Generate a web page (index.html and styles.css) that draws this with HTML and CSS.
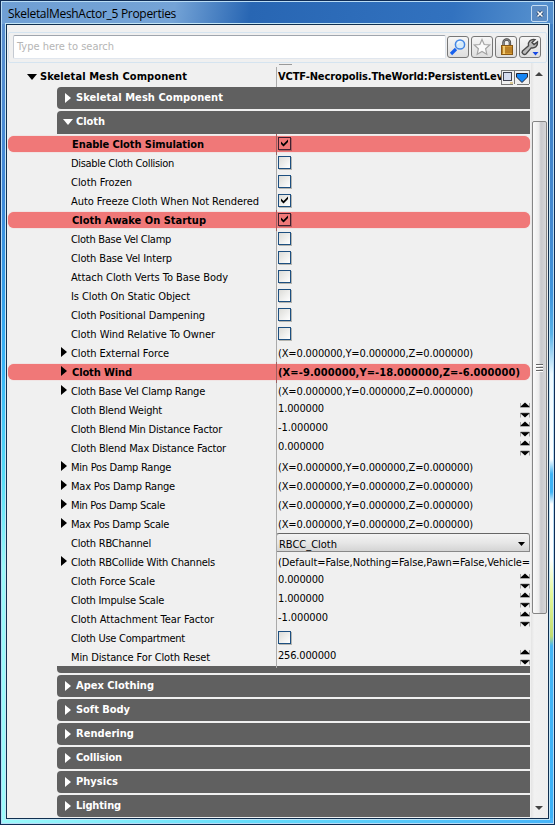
FILE: index.html
```html
<!DOCTYPE html>
<html lang="en"><head><meta charset="utf-8"><title>SkeletalMeshActor_5 Properties</title><link rel="stylesheet" href="styles.css"></head>
<body>
<div class="window">
<header class="title"><span data-w="168">SkeletalMeshActor_5 Properties</span><button class="close" aria-label="Close"><svg width="8" height="8" viewBox="0 0 8 8"><path d="M1.500 1.500l5 5M6.500 1.500l-5 5" stroke="#203c60" stroke-width="3"/><path d="M1.500 1.500l5 5M6.500 1.500l-5 5" stroke="#fff" stroke-width="1.600"/></svg></button></header>
<main class="client">
<div class="toolbar"><div class="search"><span data-w="97">Type here to search</span></div>
<div class="tools">
<div class="tool"><svg width="20" height="20" viewBox="0 0 20 20"><path d="M3 17l5-5" stroke="#1760ed" stroke-width="3.200"/><circle cx="12" cy="7.500" r="4.600" fill="#d5eafa" stroke="#4386e5" stroke-width="1.500"/><path d="M9.500 7a3 3 0 0 1 3-2.400" stroke="#fff" fill="none"/></svg></div>
<div class="tool"><svg width="20" height="20" viewBox="0 0 20 20"><path d="M10 2.500l2.200 5 5.500.5-4.100 3.700 1.200 5.500L10 14.400l-4.800 2.800 1.200-5.500L2.300 8l5.500-.5z" fill="#fafafa" stroke="#a4a4a4" stroke-width="1.200"/></svg></div>
<div class="tool"><svg width="20" height="20" viewBox="0 0 20 20"><path d="M7.500 9V5.500a3.200 3 0 0 1 6.400 0V9" fill="none" stroke="#444" stroke-width="2.400"/><path d="M7.500 9V5.500a3.200 3 0 0 1 6.400 0V9" fill="none" stroke="#aaa" stroke-width=".7"/><rect x="5.500" y="8.500" width="11" height="9" fill="#d69a33" stroke="#875713"/><path d="M6 11h10M6 13h10M6 15h10" stroke="#9f691c"/><path d="M8 9v8" stroke="#ffe08a" stroke-width="1.500"/></svg></div>
<div class="tool"><svg width="20" height="20" viewBox="0 0 20 20"><path d="M2.500 14l6-5.200C7.500 5 10.500 1.800 15 2.700L12 5.600l2 2 3.500-2.700c.6 4.200-2.800 6.600-6.300 6L6 17c-2 1.500-5-1-3.500-3z" fill="#bbb" stroke="#484848" stroke-width="1.400"/><path d="M12.500 15h6l-3 3.500z" fill="#1749e5"/></svg></div>
</div></div>
<div class="body"><div class="props">
<div class="row head"><div class="label"><svg class="open" width="10" height="6"><path d="M0 0h10L5 6z"/></svg><span data-w="147">Skeletal Mesh Component</span></div><div class="value"><span class="clip"><span data-w="225">VCTF-Necropolis.TheWorld:PersistentLev</span></span>
<svg class="headicons" width="29" height="15"><path d="M0 .5h29M.5 0v14M13.500 1v13M0 14.500h12M16 14.500h12M28.500 1v13" stroke="#777" fill="none"/><rect x="2.500" y="2.500" width="8" height="8" fill="#d5dcef" stroke="#3f4250"/><path d="M9 13h3" stroke="#c9a53a"/><path d="M15.500 3.500h11V7L21 12.500 15.500 7z" fill="#1686f5" stroke="#223" stroke-width="1"/></svg></div></div>
<div class="cat"><svg width="6" height="10"><path d="M0 0l6 5-6 5z"/></svg><span data-w="147">Skeletal Mesh Component</span></div>
<div class="cat opened"><svg width="10" height="6"><path d="M0 0h10L5 6z"/></svg><span data-w="29">Cloth</span></div>
<div id="rows"></div>
<div class="foot"></div>
<div class="cat"><svg width="6" height="10"><path d="M0 0l6 5-6 5z"/></svg><span data-w="78">Apex Clothing</span></div>
<div class="cat"><svg width="6" height="10"><path d="M0 0l6 5-6 5z"/></svg><span data-w="54">Soft Body</span></div>
<div class="cat"><svg width="6" height="10"><path d="M0 0l6 5-6 5z"/></svg><span data-w="58">Rendering</span></div>
<div class="cat"><svg width="6" height="10"><path d="M0 0l6 5-6 5z"/></svg><span data-w="46">Collision</span></div>
<div class="cat"><svg width="6" height="10"><path d="M0 0l6 5-6 5z"/></svg><span data-w="42">Physics</span></div>
<div class="cat"><svg width="6" height="10"><path d="M0 0l6 5-6 5z"/></svg><span data-w="45">Lighting</span></div>
</div>
<div class="scroll"><svg width="8" height="4"><path d="M0 4l4-4 4 4z" fill="#444"/></svg><div class="thumb"><i></i><i></i><i></i></div><svg width="8" height="4"><path d="M0 0l4 4 4-4z" fill="#444"/></svg></div></div>
</main></div>
<script src="script.js"></script>
</body></html>
```
FILE: styles.css
```css
*{box-sizing:border-box}
body{margin:0;font:11px/19px "DejaVu Sans Condensed","DejaVu Sans",sans-serif;color:#000}
span{white-space:pre}
.window{width:555px;height:825px;padding:0 5px 5px;border:1px solid #0f2c55;box-shadow:inset 0 0 0 1px #b9dcf5;background:linear-gradient(90deg,#9cfafb,#64dcfb 45%,#46b4f9) 0 100%/100% 6px no-repeat,linear-gradient(#5a8fcf,#3f88d8 20%,#359eea 32%,#38b6f8 42%,#55dcf7 55%,#97f8f8 66%,#9cfafb) 0 23px/6px 100% no-repeat,linear-gradient(#3f7fc4 0,#4489d0 200px,#3e94dc 270px,#58b2e8 310px,#eefaff 350px,#fff 435px,#3cb2f5 450px,#3cb2f5 468px,#fff 480px,#fff 535px,#e6f999 570px,#c3dc70 612px,#45b6f5 622px,#3ab0f8) 100% 23px/6px 100% no-repeat,linear-gradient(100deg,#6f9fd4 0,#74a3d6 25%,#2866b3 36%,#3272bf 65%,#5590ce 78%,#3575c0 90%)}
.title{display:flex;justify-content:space-between;height:23px;font:12px/25px "Open Sans",sans-serif;padding:0 1px 0 2px}
.close{width:17px;height:17px;margin:4px 0 0;padding:0;display:flex;align-items:center;justify-content:center;border:1px solid #c3dcf3;border-radius:2px;background:#5c8cc4}
.client{height:795px;border:1px solid #102f4f;box-shadow:0 0 0 1px #c5e6f6;background:#f0f0f0;overflow:hidden;padding-top:7px}
.toolbar{margin:0 1px;height:31px;display:flex;gap:1px;padding:2px 5px 0 4px;border:1px solid #d5e4f0;border-radius:2px}
.search{flex:1;height:24px;background:#fff;border:1px solid #e0e6ee;border-top-color:#a0a5ad;border-left-color:#c5cad2;border-radius:2px;color:#b5b5b5;padding-left:3px;line-height:21px}
.tools{display:flex;gap:2px;padding-top:1px}
.tool{width:22px;height:22px;border:1px solid #777;border-radius:3px;background:linear-gradient(#f6f6f6,#dedede)}
svg{display:block}
.body{display:flex;height:755px}
.props{width:523px;padding-top:4px;background:linear-gradient(#999,#999) 272px 1px/13px 1px no-repeat}
.row{display:grid;grid-template-columns:269px 1fr;height:19px}
.label{position:relative;padding-left:64px;line-height:21px}
.label svg{position:absolute;left:54px;top:4px}
.label svg.open{left:20px;top:7px}
.value{border-left:1px solid #aaa;padding-left:1px;display:flex;justify-content:space-between;overflow:hidden;line-height:21px}
.head{height:20px;font-weight:bold}
.head .label{padding-left:33px;line-height:20px}
.head .value{line-height:20px}
.clip{width:223px;overflow:hidden}
.headicons{margin:3px 0 0}
.bold{font-weight:bold;position:relative;isolation:isolate}
.bold::before{content:"";position:absolute;z-index:-1;left:1px;right:0;top:2px;height:16px;border-radius:6px;background:#f07878;box-shadow:0 0 1px #f07878}
.bold .label{padding-left:65px}
.bold .value{border-left-color:#a06060}
.check{width:13px;height:13px;margin:3px 0 0;border:1px solid #1d4f80;background:linear-gradient(135deg,#dcdcd8,#fff);box-shadow:1px 1px 0 #b5b5b0}
.check svg{margin-top:-1px}
.bold .check{background:#f07878;border-color:#402030;box-shadow:1px 1px 0 #b06060}
.num{line-height:17px}
.spin{width:10px;margin-top:2px}
.select{width:254px;height:19px;margin-left:-2px;border:1px solid #888;border-top-color:#666;border-radius:3px 3px 0 0;background:linear-gradient(#f3f3f3,#e7e7e7 50%,#d4d4d4);display:flex;justify-content:space-between;padding:0 4px 0 2px;line-height:21px}
.select svg{margin-top:8px}
.cat{margin:0 0 2px 50px;height:22px;border-radius:4px 0 0 4px;background:#606060;color:#fff;font-weight:bold;display:flex;align-items:center;padding:0 0 0 8px;gap:5px;line-height:22px}
.cat svg{fill:#fff}
.opened{height:23px;margin-bottom:0;border-radius:4px 0 0 0;padding:0 0 1px 6px;gap:3px}
.foot{height:7px;margin:0 0 2px 50px;border-radius:0 0 0 4px;background:#606060}
.scroll{width:16px;margin-left:1px;padding:9px 0 8px;display:flex;flex-direction:column;align-items:center;background:linear-gradient(90deg,#e4e4e4,#f1f1f1 20%,#eee)}
.thumb{width:15px;height:493px;margin:45px 0 auto;border:1px solid #858585;border-radius:2px;background:linear-gradient(90deg,#fafafa,#ececec 45%,#c8c8cc 60%,#d6d6d8);display:flex;flex-direction:column;align-items:center;justify-content:center;gap:2px}
.thumb i{width:7px;height:1px;background:#666;box-shadow:0 1px #fff}
```
FILE: script.js
```js
const vec = '(X=0.000000,Y=0.000000,Z=0.000000)';
// label, label width, kind, value, value width
const rows = [
  ['Enable Cloth Simulation', 132, 'check', true, 0, true],
  ['Disable Cloth Collision', 103, 'check', false],
  ['Cloth Frozen', 61, 'check', false],
  ['Auto Freeze Cloth When Not Rendered', 188, 'check', true],
  ['Cloth Awake On Startup', 134, 'check', true, 0, true],
  ['Cloth Base Vel Clamp', 100, 'check', false],
  ['Cloth Base Vel Interp', 101, 'check', false],
  ['Attach Cloth Verts To Base Body', 157, 'check', false],
  ['Is Cloth On Static Object', 119, 'check', false],
  ['Cloth Positional Dampening', 134, 'check', false],
  ['Cloth Wind Relative To Owner', 144, 'check', false],
  ['Cloth External Force', 98, 'vec', vec, 195],
  ['Cloth Wind', 60, 'vec', '(X=-9.000000,Y=-18.000000,Z=-6.000000)', 242, true],
  ['Cloth Base Vel Clamp Range', 134, 'vec', vec, 195],
  ['Cloth Blend Weight', 91, 'num', '1.000000', 46],
  ['Cloth Blend Min Distance Factor', 151, 'num', '-1.000000', 50],
  ['Cloth Blend Max Distance Factor', 155, 'num', '0.000000', 46],
  ['Min Pos Damp Range', 100, 'vec', vec, 195],
  ['Max Pos Damp Range', 104, 'vec', vec, 195],
  ['Min Pos Damp Scale', 94, 'vec', vec, 195],
  ['Max Pos Damp Scale', 98, 'vec', vec, 195],
  ['Cloth RBChannel', 80, 'select', 'RBCC_Cloth', 58],
  ['Cloth RBCollide With Channels', 144, 'vec', '(Default=False,Nothing=False,Pawn=False,Vehicle=', 252],
  ['Cloth Force Scale', 84, 'num', '0.000000', 46],
  ['Cloth Impulse Scale', 93, 'num', '1.000000', 46],
  ['Cloth Attachment Tear Factor', 143, 'num', '-1.000000', 50],
  ['Cloth Use Compartment', 114, 'check', false],
  ['Min Distance For Cloth Reset', 139, 'num', '256.000000', 58]
];
const text = (s, w) => `<span data-w="${w}">${s}</span>`;
const value = {
  check: v => `<div class="check">${v ? '<svg width="11" height="11"><path d="M2 4.500l2.500 2.500L9 2.500v2.500L4.500 9.500 2 7z"/></svg>' : ''}</div>`,
  vec: text,
  num: (v, w) => `<div class="num">${text(v, w)}</div><svg class="spin" width="10" height="16"><path d="M0 5l5-4.500L10 5zM0 11l5 4.500 5-4.500z"/><path d="M.5 1v4.500h9V1M.5 15.500V11h9v4.500" fill="none" stroke="#777" stroke-width=".6"/></svg>`,
  select: (v, w) => `<div class="select">${text(v, w)}<svg width="7" height="4"><path d="M0 0h7L3.500 4z"/></svg></div>`
};
document.getElementById('rows').innerHTML = rows.map(([l, w, kind, v, vw, bold]) =>
  `<div class="row${bold ? ' bold' : ''}"><div class="label">${kind === 'vec' ? '<svg width="6" height="10"><path d="M0 0l6 5-6 5z"/></svg>' : ''}${text(l, w)}</div><div class="value">${value[kind](v, vw)}</div></div>`).join('');
document.querySelectorAll('[data-w]').forEach(e => {
  const range = document.createRange();
  range.selectNodeContents(e);
  const natural = range.getBoundingClientRect().width;
  e.style.letterSpacing = (e.dataset.w - natural) / e.textContent.length + 'px';
});
```
